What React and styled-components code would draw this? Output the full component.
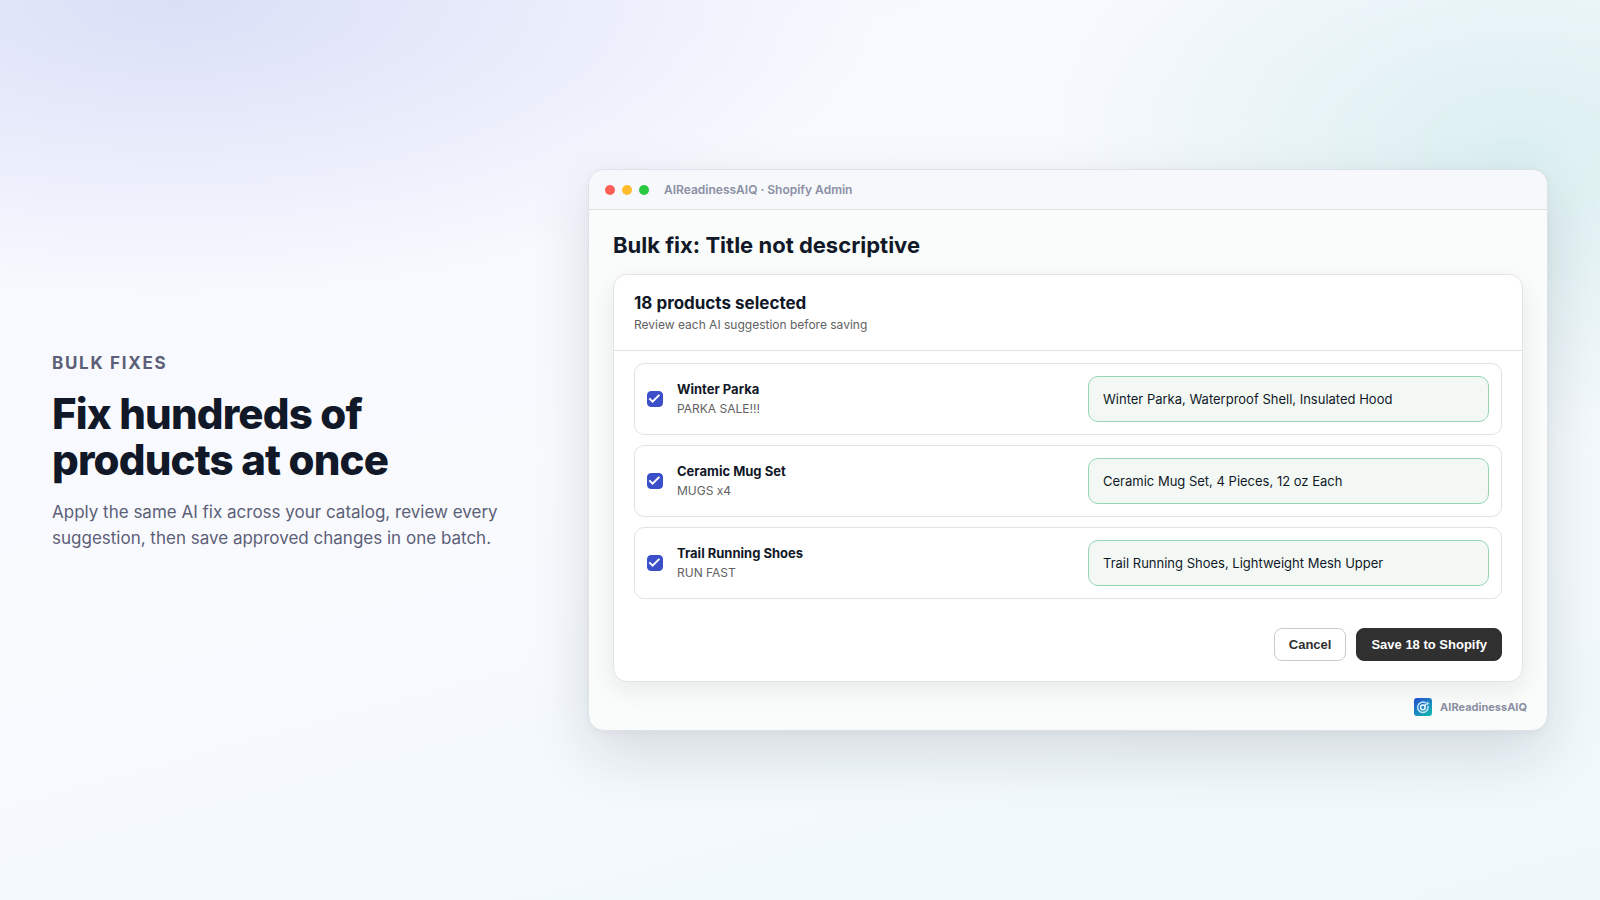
import React, { useState } from "react";
import styled, { createGlobalStyle } from "styled-components";

const GlobalStyle = createGlobalStyle`
  * {
    box-sizing: border-box;
  }

  body {
    margin: 0;
    font-family: "Inter", "Liberation Sans", sans-serif;
    color: #111827;
  }

  h1, h2, h3, p {
    margin: 0;
  }
`;

const Page = styled.main`
  display: grid;
  grid-template-columns: 1fr 2fr;
  align-items: center;
  gap: 56px;
  min-height: 100vh;
  padding: 48px 52px;
  background:
    radial-gradient(80% 60% at 11% 0%, rgba(59, 79, 201, 0.15), transparent 55%),
    radial-gradient(55% 60% at 95% 17%, rgba(20, 168, 150, 0.13), transparent 55%),
    linear-gradient(165deg, #f6f8ff 0%, #f9fafe 45%, #eef8fb 100%);
`;

const Copy = styled.div`
  display: flex;
  flex-direction: column;
`;

const Eyebrow = styled.p`
  margin-bottom: 15px;
  font-size: 17px;
  font-weight: 700;
  line-height: 26px;
  letter-spacing: 0.1em;
  text-transform: uppercase;
  color: #5c5f77;
`;

const Headline = styled.h1`
  margin-bottom: 16px;
  font-size: 42px;
  font-weight: 800;
  line-height: 46px;
  letter-spacing: -0.02em;
`;

const Lead = styled.p`
  font-size: 17px;
  line-height: 26px;
  color: #5c5f77;
`;

const Window = styled.section`
  overflow: hidden;
  background: #fafcfb;
  border: 1px solid #dde1ea;
  border-radius: 16px;
  box-shadow:
    0 24px 60px rgba(17, 24, 39, 0.13),
    0 2px 8px rgba(17, 24, 39, 0.04);
`;

const TitleBar = styled.header`
  display: flex;
  align-items: center;
  gap: 7px;
  padding: 10px 16px;
  background: #f6f8fc;
  border-bottom: 1px solid #e1e3e5;
`;

const Dot = styled.span`
  width: 10px;
  height: 10px;
  border-radius: 50%;
  background: ${(props) => props.$color};
`;

const WindowTitle = styled.span`
  margin-left: 8px;
  font-size: 12px;
  font-weight: 600;
  line-height: 19px;
  color: #8b8fa3;
`;

const Body = styled.div`
  padding: 19px 24px 16px;
`;

const PageTitle = styled.h2`
  margin-bottom: 12px;
  font-size: 22px;
  font-weight: 700;
  line-height: 33px;
`;

const Card = styled.div`
  background: #fff;
  border: 1px solid #e1e3e5;
  border-radius: 14px;
  box-shadow: 0 8px 24px rgba(17, 24, 39, 0.08);
`;

const CardHeader = styled.div`
  padding: 15px 20px 16px;
  border-bottom: 1px solid #e1e3e5;
`;

const CardTitle = styled.h3`
  font-size: 17px;
  font-weight: 700;
  line-height: 26px;
`;

const Muted = styled.p`
  font-size: 12px;
  line-height: 18px;
  color: #616161;
`;

const Rows = styled.div`
  display: flex;
  flex-direction: column;
  gap: 10px;
  padding: 12px 20px;
`;

const Row = styled.div`
  display: grid;
  grid-template-columns: 16px 1fr 1fr;
  align-items: center;
  gap: 12px;
  padding: 12px;
  border: 1px solid #e1e3e5;
  border-radius: 10px;
`;

const CheckWrap = styled.span`
  display: grid;
  width: 16px;
  height: 16px;

  > * {
    grid-area: 1 / 1;
  }

  svg {
    pointer-events: none;
  }
`;

const CheckInput = styled.input`
  appearance: none;
  width: 16px;
  height: 16px;
  margin: 0;
  border: 1px solid #3b4fc9;
  border-radius: 4px;
  background: #fff;

  &:checked {
    background: #3b4fc9;
  }
`;

const ProductLabel = styled.label`
  padding-left: 2px;
`;

const ProductName = styled.span`
  display: block;
  font-size: 13px;
  font-weight: 700;
  line-height: 19px;
`;

const OldTitle = styled.span`
  display: block;
  font-size: 12px;
  line-height: 19px;
  color: #616161;
`;

const Suggestion = styled.p`
  padding: 12px 14px;
  font-size: 13px;
  line-height: 20px;
  background: #f3f8f5;
  border: 1px solid #95d5b2;
  border-radius: 10px;
`;

const Actions = styled.div`
  display: flex;
  justify-content: flex-end;
  gap: 10px;
  padding: 17px 20px 20px;
`;

const Button = styled.button`
  padding: 8px 14px;
  font-family: "Liberation Sans", Arial, sans-serif;
  font-size: 13px;
  font-weight: 600;
  line-height: 15px;
  color: ${(props) => (props.$primary ? "#fff" : "#303030")};
  background: ${(props) => (props.$primary ? "#303030" : "#fff")};
  border: 1px solid ${(props) => (props.$primary ? "#303030" : "#c9cccf")};
  border-radius: 8px;
`;

const Brand = styled.footer`
  display: flex;
  align-items: center;
  justify-content: flex-end;
  gap: 8px;
  padding: 0 20px 14px;
  font-size: 11px;
  font-weight: 700;
  line-height: 18px;
  color: #8b8fa3;
`;

const PRODUCTS = [
  {
    id: "parka",
    name: "Winter Parka",
    current: "PARKA SALE!!!",
    suggestion: "Winter Parka, Waterproof Shell, Insulated Hood",
  },
  {
    id: "mug",
    name: "Ceramic Mug Set",
    current: "MUGS x4",
    suggestion: "Ceramic Mug Set, 4 Pieces, 12 oz Each",
  },
  {
    id: "shoes",
    name: "Trail Running Shoes",
    current: "RUN FAST",
    suggestion: "Trail Running Shoes, Lightweight Mesh Upper",
  },
];

function BrandMark() {
  return (
    <svg width="18" height="18" viewBox="0 0 18 18" fill="none" aria-hidden="true">
      <defs>
        <linearGradient id="mark" x1="2" y1="0" x2="16" y2="18" gradientUnits="userSpaceOnUse">
          <stop stopColor="#2350cf" />
          <stop offset="1" stopColor="#10b9ae" />
        </linearGradient>
      </defs>
      <rect width="18" height="18" rx="3" fill="url(#mark)" />
      <path d="M11.2 4.6A5.2 5.2 0 1 0 14 8.2" stroke="#c4e2f7" strokeWidth="1.5" strokeLinecap="round" />
      <circle cx="8.9" cy="9.4" r="2.3" stroke="#eef8ff" strokeWidth="1.5" />
      <path d="M10 8.2l2.4-2.2" stroke="#eef8ff" strokeWidth="1.2" />
      <path d="M13.6 3.6v3.4M11.9 5.3h3.4" stroke="#c4e2f7" strokeWidth="1" />
    </svg>
  );
}

function ProductRow({ product, checked, onToggle }) {
  return (
    <Row>
      <CheckWrap>
        <CheckInput type="checkbox" id={product.id} checked={checked} onChange={onToggle} />
        {checked && (
          <svg width="16" height="16" viewBox="0 0 16 16" fill="none" aria-hidden="true">
            <path d="M2.3 7.4L5.6 10.7L12.4 3.9" stroke="#fff" strokeWidth="2" />
          </svg>
        )}
      </CheckWrap>
      <ProductLabel htmlFor={product.id}>
        <ProductName>{product.name}</ProductName>
        <OldTitle>{product.current}</OldTitle>
      </ProductLabel>
      <Suggestion>{product.suggestion}</Suggestion>
    </Row>
  );
}

export default function App() {
  const [selected, setSelected] = useState(PRODUCTS.map((p) => p.id));

  const toggle = (id) => {
    setSelected((ids) => (ids.includes(id) ? ids.filter((i) => i !== id) : [...ids, id]));
  };

  return (
    <>
      <GlobalStyle />
      <Page>
        <Copy>
          <Eyebrow>Bulk fixes</Eyebrow>
          <Headline>Fix hundreds of products at once</Headline>
          <Lead>
            Apply the same AI fix across your catalog, review every suggestion, then save approved
            changes in one batch.
          </Lead>
        </Copy>
        <Window>
          <TitleBar>
            <Dot $color="#ff5f57" />
            <Dot $color="#febc2e" />
            <Dot $color="#28c840" />
            <WindowTitle>AIReadinessAIQ · Shopify Admin</WindowTitle>
          </TitleBar>
          <Body>
            <PageTitle>Bulk fix: Title not descriptive</PageTitle>
            <Card>
              <CardHeader>
                <CardTitle>18 products selected</CardTitle>
                <Muted>Review each AI suggestion before saving</Muted>
              </CardHeader>
              <Rows>
                {PRODUCTS.map((product) => (
                  <ProductRow
                    key={product.id}
                    product={product}
                    checked={selected.includes(product.id)}
                    onToggle={() => toggle(product.id)}
                  />
                ))}
              </Rows>
              <Actions>
                <Button type="button">Cancel</Button>
                <Button type="button" $primary>
                  Save 18 to Shopify
                </Button>
              </Actions>
            </Card>
          </Body>
          <Brand>
            <BrandMark />
            AIReadinessAIQ
          </Brand>
        </Window>
      </Page>
    </>
  );
}
